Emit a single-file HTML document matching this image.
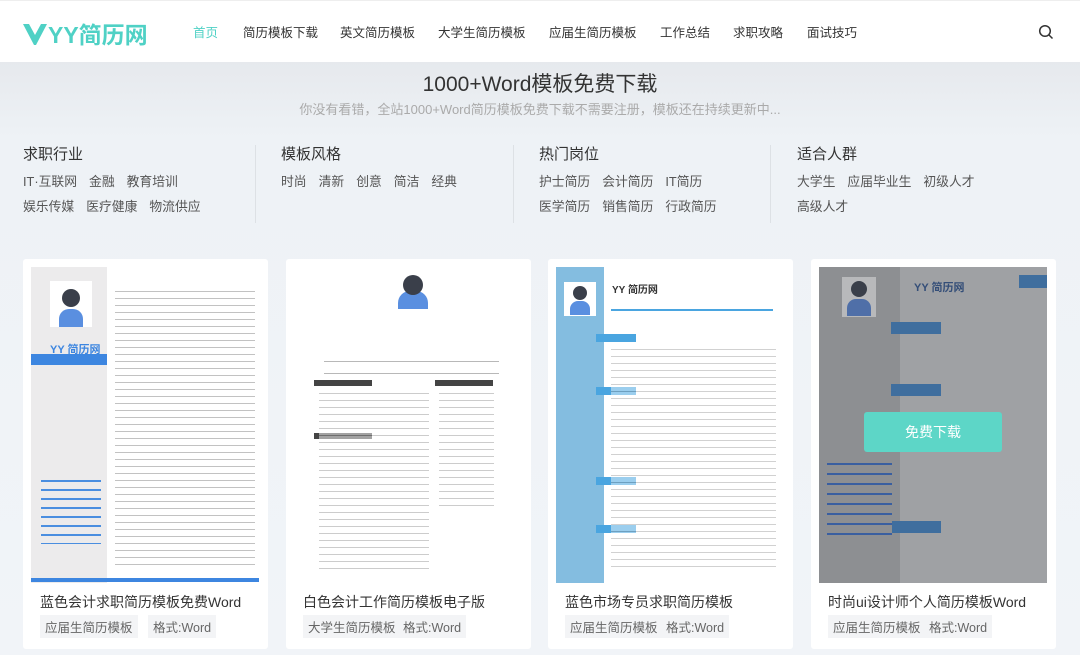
<!DOCTYPE html>
<html><head><meta charset="utf-8"><style>
*{margin:0;padding:0;box-sizing:border-box}
body{width:1080px;height:655px;overflow:hidden;font-family:"Liberation Sans","Noto Sans CJK SC",sans-serif;background:linear-gradient(#e6e9ed 62px,#eef2f6 140px,#f1f4f8);position:relative}
.hdr{position:absolute;left:0;top:0;width:1080px;height:62px;background:#fff;border-top:1px solid #eee}
.logo{position:absolute;left:22px;top:15px;color:#4fd1c5;font-size:23px;font-weight:bold;letter-spacing:0px}
.nav{position:absolute;top:21px;font-size:12.5px;color:#333}
.t1{position:absolute;top:68px;width:1080px;text-align:center;font-size:21px;color:#333}
.t2{position:absolute;top:99px;width:1080px;text-align:center;font-size:13px;color:#aaa}
.cat{position:absolute;top:143px}
.cat h4{font-weight:normal;font-size:15px;color:#333;margin-bottom:5px}
.cat p{font-size:12.8px;color:#555;line-height:25px}
.cat p span{margin-right:12px}
.div{position:absolute;top:145px;width:1px;height:78px;background:#dde1e5}
.card{position:absolute;top:259px;width:245px;height:390px;background:#fff;border-radius:3px}
.img{position:absolute;left:8px;top:8px;width:228px;height:316px;overflow:hidden;background:#fff}
.ct{position:absolute;left:17px;top:333px;font-size:14px;color:#333}
.tag{position:absolute;top:356px;font-size:12.5px;color:#666;background:#f3f4f6;padding:2px 5px}
.av{position:absolute;border-radius:50%;background:#3a3f4a}
</style></head><body>
<div class="hdr">
<div class="logo"><svg width="26" height="26" viewBox="0 0 26 26" style="vertical-align:-4px"><path d="M1 3 L7 3 L13 14 L19 3 L25 3 L14 24 L12 24 Z" fill="#4fd1c5"/><path d="M8 3 L13 11 L18 3" fill="#fff"/></svg>YY简历网</div>
<div class="nav" style="left:193px;color:#4fd1c5">首页</div>
<div class="nav" style="left:243px">简历模板下载</div>
<div class="nav" style="left:340px">英文简历模板</div>
<div class="nav" style="left:438px">大学生简历模板</div>
<div class="nav" style="left:549px">应届生简历模板</div>
<div class="nav" style="left:660px">工作总结</div>
<div class="nav" style="left:733px">求职攻略</div>
<div class="nav" style="left:807px">面试技巧</div>
<svg style="position:absolute;left:1038px;top:23px" width="16" height="16" viewBox="0 0 16 16"><circle cx="7" cy="7" r="5.3" fill="none" stroke="#333" stroke-width="1.5"/><path d="M11 11 L14.5 14.5" stroke="#333" stroke-width="1.5"/></svg>
</div>
<div class="t1">1000+Word模板免费下载</div>
<div class="t2">你没有看错，全站1000+Word简历模板免费下载不需要注册，模板还在持续更新中...</div>
<div class="cat" style="left:23px"><h4>求职行业</h4><p><span>IT·互联网</span><span>金融</span><span>教育培训</span><br><span>娱乐传媒</span><span>医疗健康</span><span>物流供应</span></p></div>
<div class="div" style="left:255px"></div>
<div class="cat" style="left:281px"><h4>模板风格</h4><p><span>时尚</span><span>清新</span><span>创意</span><span>简洁</span><span>经典</span></p></div>
<div class="div" style="left:513px"></div>
<div class="cat" style="left:539px"><h4>热门岗位</h4><p><span>护士简历</span><span>会计简历</span><span>IT简历</span><br><span>医学简历</span><span>销售简历</span><span>行政简历</span></p></div>
<div class="div" style="left:770px"></div>
<div class="cat" style="left:797px"><h4>适合人群</h4><p><span>大学生</span><span>应届毕业生</span><span>初级人才</span><br><span>高级人才</span></p></div>

<div class="card" style="left:23px"><div class="img">
<div style="position:absolute;left:0;top:0;width:76px;height:316px;background:#ecebec"></div>
<div style="position:absolute;left:19px;top:14px;width:42px;height:46px;background:#fff"></div>
<div style="position:absolute;left:28px;top:42px;width:24px;height:18px;background:#5a8fe0;border-radius:10px 10px 0 0"></div>
<div class="av" style="left:31px;top:22px;width:18px;height:18px"></div>
<div style="position:absolute;left:19px;top:74px;color:#3d86e0;font-size:11px;font-weight:bold">YY 简历网</div>
<div style="position:absolute;left:0;top:87px;width:76px;height:11px;background:#3d86e0"></div>
<div style="position:absolute;left:10px;top:207px;width:60px;height:70px;background:repeating-linear-gradient(#ecebec 0 6px,#4a8ee0 6px 8px,#ecebec 8px 9px)"></div>
<div style="position:absolute;left:84px;top:20px;width:140px;height:280px;background:repeating-linear-gradient(#fff 0 4px,#999 4px 5px,#fff 5px 7px);opacity:.6"></div>
<div style="position:absolute;left:0;top:311px;width:228px;height:4px;background:#3d86e0"></div>
</div><div class="ct">蓝色会计求职简历模板免费Word</div><div class="tag" style="left:17px">应届生简历模板</div><div class="tag" style="left:125px">格式:Word</div></div>

<div class="card" style="left:286px"><div class="img">
<div style="position:absolute;left:104px;top:24px;width:30px;height:18px;background:#5a8fe0;border-radius:12px 12px 0 0"></div>
<div class="av" style="left:109px;top:8px;width:20px;height:20px"></div>
<div style="position:absolute;left:30px;top:90px;width:175px;height:20px;background:repeating-linear-gradient(#fff 0 4px,#888 4px 5px,#fff 5px 12px);opacity:.6"></div>
<div style="position:absolute;left:20px;top:113px;width:58px;height:6px;background:#444"></div>
<div style="position:absolute;left:141px;top:113px;width:58px;height:6px;background:#444"></div>
<div style="position:absolute;left:20px;top:166px;width:58px;height:6px;background:#444"></div>
<div style="position:absolute;left:25px;top:122px;width:110px;height:180px;background:repeating-linear-gradient(#fff 0 4px,#999 4px 5px,#fff 5px 7px);opacity:.5"></div>
<div style="position:absolute;left:145px;top:122px;width:55px;height:120px;background:repeating-linear-gradient(#fff 0 4px,#999 4px 5px,#fff 5px 7px);opacity:.5"></div>
</div><div class="ct">白色会计工作简历模板电子版</div><div class="tag" style="left:17px">大学生简历模板</div><div class="tag" style="left:112px">格式:Word</div></div>

<div class="card" style="left:548px"><div class="img">
<div style="position:absolute;left:0;top:0;width:48px;height:316px;background:#84bde0"></div>
<div style="position:absolute;left:8px;top:15px;width:32px;height:34px;background:#fff"></div>
<div style="position:absolute;left:14px;top:34px;width:20px;height:14px;background:#5a8fe0;border-radius:8px 8px 0 0"></div>
<div class="av" style="left:17px;top:19px;width:14px;height:14px"></div>
<div style="position:absolute;left:56px;top:14px;font-size:10px;font-weight:bold;color:#333">YY 简历网</div>
<div style="position:absolute;left:55px;top:42px;width:162px;height:2px;background:#4aa5e0"></div>
<div style="position:absolute;left:40px;top:67px;width:40px;height:8px;background:#4aa5e0"></div>
<div style="position:absolute;left:40px;top:120px;width:40px;height:8px;background:#4aa5e0"></div>
<div style="position:absolute;left:40px;top:210px;width:40px;height:8px;background:#4aa5e0"></div>
<div style="position:absolute;left:40px;top:258px;width:40px;height:8px;background:#4aa5e0"></div>
<div style="position:absolute;left:55px;top:78px;width:165px;height:225px;background:repeating-linear-gradient(#fff 0 4px,#999 4px 5px,#fff 5px 7px);opacity:.45"></div>
</div><div class="ct">蓝色市场专员求职简历模板</div><div class="tag" style="left:17px">应届生简历模板</div><div class="tag" style="left:113px">格式:Word</div></div>

<div class="card" style="left:811px"><div class="img" style="background:#8d8f92">
<div style="position:absolute;left:81px;top:0;width:147px;height:316px;background:#9fa1a4"></div>
<div style="position:absolute;left:23px;top:10px;width:34px;height:40px;background:#b8b9bb"></div>
<div style="position:absolute;left:28px;top:32px;width:24px;height:17px;background:#4f6fa8;border-radius:9px 9px 0 0"></div>
<div class="av" style="left:32px;top:14px;width:16px;height:16px"></div>
<div style="position:absolute;left:95px;top:12px;font-size:11px;font-weight:bold;color:#344e78">YY 简历网</div>
<div style="position:absolute;left:200px;top:8px;width:28px;height:13px;background:#3f6e9e"></div>
<div style="position:absolute;left:72px;top:55px;width:50px;height:12px;background:#3f6e9e"></div>
<div style="position:absolute;left:72px;top:117px;width:50px;height:12px;background:#3f6e9e"></div>
<div style="position:absolute;left:72px;top:254px;width:50px;height:12px;background:#3f6e9e"></div>
<div style="position:absolute;left:8px;top:190px;width:65px;height:80px;background:repeating-linear-gradient(#8d8f92 0 6px,#3a5fa0 6px 8px,#8d8f92 8px 10px)"></div>
<div style="position:absolute;left:45px;top:145px;width:138px;height:40px;background:#5dd6c7;border-radius:3px;color:#fff;font-size:14px;text-align:center;line-height:40px">免费下载</div>
</div><div class="ct">时尚ui设计师个人简历模板Word</div><div class="tag" style="left:17px">应届生简历模板</div><div class="tag" style="left:113px">格式:Word</div></div>
</body></html>
